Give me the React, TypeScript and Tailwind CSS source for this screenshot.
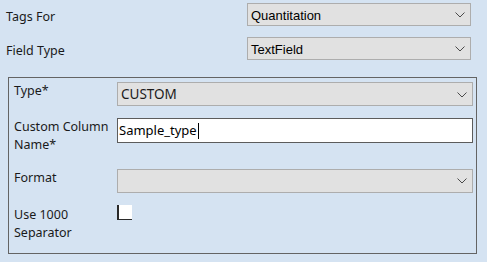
import React from "react";

function Chevron() {
  return (
    <svg width="10" height="6" viewBox="0 0 10 6" className="shrink-0">
      <polyline points="0.5,0.5 5,5 9.5,0.5" fill="none" stroke="#4a4a4a" strokeWidth="1" />
    </svg>
  );
}

function Select({ value, className }: { value?: string; className: string }) {
  return (
    <div className={`flex items-center justify-between bg-[#e1e1e1] border border-[#adadad] pl-[3px] pr-[5px] ${className}`}>
      <span>{value}</span>
      <Chevron />
    </div>
  );
}

export default function App() {
  return (
    <div className="w-[487px] h-[262px] bg-[#d5e3f2] text-[#1a1a1a] font-['Noto_Sans',sans-serif] text-[12.5px] leading-[17px] pt-[3px] overflow-hidden">
      <div className="flex pl-[6px]">
        <div className="w-[241px] pt-[5px]">Tags For</div>
        <Select value="Quantitation" className="w-[224px] h-[23px] font-['Liberation_Sans',sans-serif] text-[13px] text-black pt-[1px]" />
      </div>
      <div className="flex pl-[6px] mt-[11px]">
        <div className="w-[241px] pt-[5px]">Field Type</div>
        <Select value="TextField" className="w-[224px] h-[23px] font-['Liberation_Sans',sans-serif] text-[13px] text-black pt-[1px]" />
      </div>

      <div className="ml-[8px] mt-[17px] w-[469px] h-[177px] border border-[#646464] pl-[5px] pt-[4px]">
        <div className="flex">
          <div className="w-[103px]">Type*</div>
          <Select value="CUSTOM" className="w-[356px] h-[24px] text-[13.5px] pt-[1px]" />
        </div>
        <div className="flex mt-[12px]">
          <div className="w-[103px] leading-[18px]">Custom Column<br />Name*</div>
          <div className="w-[356px] h-[25px] bg-white border border-[#5c5c5c] pl-[1px] flex items-center text-[13px] text-black">
            <span>Sample_type</span>
            <span className="w-px h-[16px] bg-black ml-px" />
          </div>
        </div>
        <div className="flex mt-[15px]">
          <div className="w-[103px]">Format</div>
          <Select className="w-[356px] h-[24px]" />
        </div>
        <div className="flex mt-[12px]">
          <div className="w-[103px] pt-[1px] leading-[18px]">Use 1000<br />Separator</div>
          <div className="w-[15px] h-[15px] bg-white border-l-2 border-b border-[#2a2a2a]" />
        </div>
      </div>
    </div>
  );
}
